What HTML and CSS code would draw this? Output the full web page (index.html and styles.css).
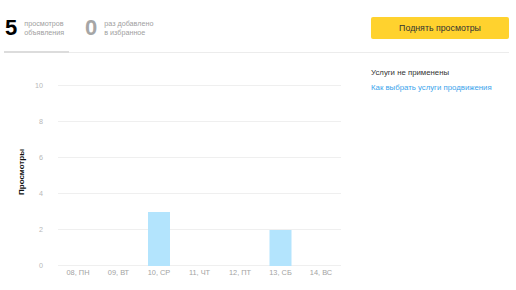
FILE: index.html
```html
<!DOCTYPE html>
<html lang="ru">
<head>
<meta charset="utf-8">
<link rel="stylesheet" href="styles.css">
</head>
<body>
<div class="page">
  <div class="header">
    <div class="tabs">
      <div class="stat stat-active">
        <span class="num">5</span>
        <span class="lbl">просмотров<br>объявления</span>
      </div>
      <div class="stat stat-muted">
        <span class="num">0</span>
        <span class="lbl">раз добавлено<br>в избранное</span>
      </div>
    </div>
    <button class="btn">Поднять просмотры</button>
  </div>
  <div class="main">
    <svg class="chart" width="360" height="237" viewBox="0 0 360 237">
      <g class="grid">
        <line x1="58" x2="341" y1="32.5" y2="32.5"/>
        <line x1="58" x2="341" y1="68.5" y2="68.5"/>
        <line x1="58" x2="341" y1="104.5" y2="104.5"/>
        <line x1="58" x2="341" y1="140.5" y2="140.5"/>
        <line x1="58" x2="341" y1="176.5" y2="176.5"/>
        <line x1="58" x2="341" y1="212.5" y2="212.5"/>
      </g>
      <g class="ylab">
        <text x="43" y="33">10</text>
        <text x="43" y="69">8</text>
        <text x="43" y="105">6</text>
        <text x="43" y="141">4</text>
        <text x="43" y="177">2</text>
        <text x="43" y="213">0</text>
      </g>
      <rect class="bar" x="148" y="159" width="22" height="54"/>
      <rect class="bar" x="269.5" y="177" width="22" height="36"/>
      <g class="xlab">
        <text x="78" y="220">08, ПН</text>
        <text x="118.5" y="220">09, ВТ</text>
        <text x="159" y="220">10, СР</text>
        <text x="199.5" y="220">11, ЧТ</text>
        <text x="240" y="220">12, ПТ</text>
        <text x="280.5" y="220">13, СБ</text>
        <text x="321" y="220">14, ВС</text>
      </g>
      <text class="ytitle" transform="translate(22 119) rotate(-90)">Просмотры</text>
    </svg>
    <div class="side">
      <div class="side-note">Услуги не применены</div>
      <a class="side-link" href="#">Как выбрать услуги продвижения</a>
    </div>
  </div>
</div>
</body>
</html>
```
FILE: styles.css
```css
* { box-sizing: border-box; }
html, body { margin: 0; padding: 0; background: #fff; }
body { font-family: "Liberation Sans", Arial, sans-serif; color: #333; }
.page { width: 516px; height: 290px; overflow: hidden; }
.header {
  display: flex;
  justify-content: space-between;
  align-items: flex-start;
  margin-left: 4px;
  width: 505px;
  height: 53px;
  border-bottom: 1px solid #ececec;
}
.tabs { display: flex; height: 53px; }
.stat {
  display: flex;
  align-items: flex-start;
  padding-top: 18px;
  height: 53px;
}
.stat-active {
  width: 65px;
  border-bottom: 2px solid #dcdcdc;
}
.stat-muted { margin-left: 15px; }
.num {
  font-size: 22px;
  font-weight: bold;
  line-height: 20px;
  color: #000;
  margin-left: 1px;
}
.stat-muted .num { color: #a6a6a6; }
.lbl {
  font-size: 7.2px;
  line-height: 9px;
  color: #a0a0a0;
  margin-left: 7px;
  margin-top: 1px;
}
.btn {
  margin-top: 17px;
  width: 138px;
  height: 22px;
  border: 0;
  border-radius: 2px;
  background: #ffd22e;
  color: #333;
  font-family: "Liberation Sans", Arial, sans-serif;
  font-size: 8.8px;
  padding: 0;
}
.main { display: flex; }
.chart { display: block; flex: none; }
.grid line { stroke: #efefef; stroke-width: 1; }
.ylab text {
  font-size: 7.2px;
  fill: #b8b8b8;
  text-anchor: end;
  dominant-baseline: middle;
  font-family: "Liberation Sans", Arial, sans-serif;
}
.xlab text {
  font-size: 7.4px;
  fill: #a3a3a3;
  text-anchor: middle;
  dominant-baseline: middle;
  font-family: "Liberation Sans", Arial, sans-serif;
}
.bar { fill: #b3e4fd; }
.ytitle {
  font-size: 8px;
  font-weight: bold;
  fill: #111;
  text-anchor: middle;
  dominant-baseline: middle;
  font-family: "Liberation Sans", Arial, sans-serif;
}
.side {
  margin-left: 11px;
  padding-top: 14px;
  display: flex;
  flex-direction: column;
  gap: 4px;
}
.side-note { font-size: 7.8px; line-height: 11px; color: #333; }
.side-link {
  font-size: 7.8px;
  line-height: 11px;
  color: #3aa4ec;
  text-decoration: none;
}
```
